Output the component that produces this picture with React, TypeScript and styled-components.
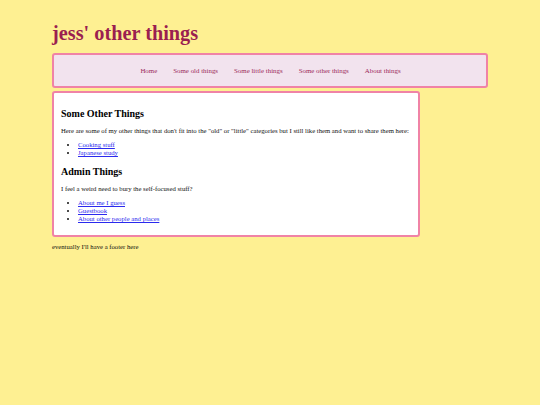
import React from "react";
import styled, { createGlobalStyle } from "styled-components";

const Global = createGlobalStyle`
  html, body { margin: 0; padding: 0; }
  body {
    background: #fef092;
    font-family: "Liberation Serif", "Times New Roman", serif;
    font-size: 6.7px;
    color: #111;
  }
`;

const Page = styled.div`
  width: 436px;
  margin: 0 auto;
  padding-top: 21px;
`;

const Title = styled.h1`
  margin: 0 0 8px 0;
  font-family: "Liberation Serif", Georgia, serif;
  font-size: 20.3px;
  font-weight: bold;
  color: #9b1f50;
  line-height: 24px;
`;

const Nav = styled.nav`
  box-sizing: border-box;
  height: 35px;
  background: #f2e3ee;
  border: 2px solid #f083a6;
  border-radius: 3px;
  display: flex;
  align-items: center;
  justify-content: center;
  gap: 16px;
  padding-left: 1px;
`;

const NavLink = styled.a`
  color: #9b2a5a;
  font-size: 6.9px;
  text-decoration: none;
`;

const Main = styled.main`
  box-sizing: border-box;
  width: 368px;
  margin-top: 3px;
  background: #fff;
  border: 2px solid #f083a6;
  border-radius: 3px;
  padding: 6px 7px 4.5px 7px;
`;

const Heading = styled.h2`
  font-size: 10px;
  margin: 8px 0 7px 0;
  line-height: 13px;
  color: #000;
`;

const Para = styled.p`
  margin: 0 0 6px 0;
  line-height: 8px;
`;

const List = styled.ul`
  margin: 0 0 7.5px 0;
  padding-left: 17px;
  line-height: 8px;
`;

const Link = styled.a`
  color: #2a2aee;
`;

const Footer = styled.footer`
  margin-top: 6px;
  line-height: 8px;
`;

export default function App() {
  const navItems = ["Home", "Some old things", "Some little things", "Some other things", "About things"];
  return (
    <>
      <Global />
      <Page>
        <Title>jess' other things</Title>
        <Nav>
          {navItems.map((n) => (
            <NavLink key={n} href="#">{n}</NavLink>
          ))}
        </Nav>
        <Main>
          <Heading>Some Other Things</Heading>
          <Para>
            Here are some of my other things that don't fit into the "old" or "little" categories but I still like them and want to share them here:
          </Para>
          <List>
            <li><Link href="#">Cooking stuff</Link></li>
            <li><Link href="#">Japanese study</Link></li>
          </List>
          <Heading>Admin Things</Heading>
          <Para>I feel a weird need to bury the self-focused stuff?</Para>
          <List>
            <li><Link href="#">About me I guess</Link></li>
            <li><Link href="#">Guestbook</Link></li>
            <li><Link href="#">About other people and places</Link></li>
          </List>
        </Main>
        <Footer>eventually I'll have a footer here</Footer>
      </Page>
    </>
  );
}
